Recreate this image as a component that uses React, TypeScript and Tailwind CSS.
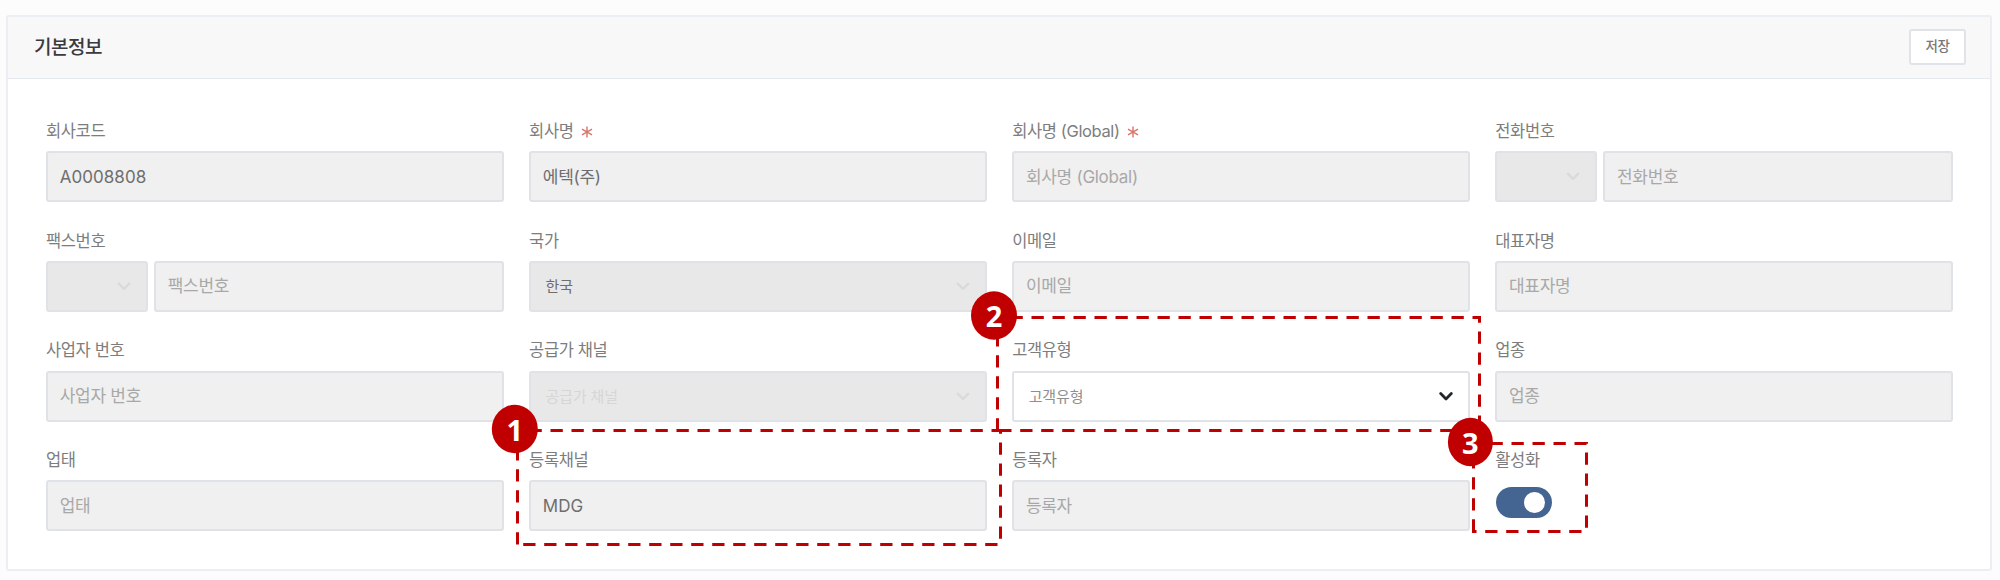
import type { ReactNode } from "react";

function Chevron({ active = false }: { active?: boolean }) {
  return (
    <svg
      viewBox="0 0 14 9"
      className={`h-[9px] w-[14px] shrink-0 ${active ? "text-[#23272b]" : "text-[#d8dadb]"}`}
      fill="none"
      stroke="currentColor"
      strokeWidth={active ? 2.8 : 2.3}
      strokeLinecap="round"
      strokeLinejoin="round"
    >
      <path d="M1.7 1.6 7 6.900l5.300-5.300" />
    </svg>
  );
}

function RequiredMark() {
  return (
    <svg viewBox="0 0 12 12" className="mt-[2px] ml-[7px] size-3 text-[#d9756c]" fill="none" stroke="currentColor" strokeWidth="1.4">
      <path d="M6 .5v11M1 3.200l10 5.600M11 3.200 1 8.800" />
    </svg>
  );
}

function Field({ label, required = false, children }: { label: string; required?: boolean; children: ReactNode }) {
  return (
    <div className="flex min-w-0 flex-col">
      <div className="flex h-[42px] items-center pt-[2px] text-[16.5px] leading-none tracking-[-0.38px] whitespace-pre text-[#7d7d7d]">
        {label}
        {required && <RequiredMark />}
      </div>
      <div className="flex h-[51px] gap-[6px]">{children}</div>
    </div>
  );
}

function TextBox({ value, placeholder = "" }: { value?: string; placeholder?: string }) {
  return (
    <div
      className={`flex min-w-0 flex-1 items-center rounded-[3px] border-2 border-[#dfe3e7] bg-[#f0f0f0] px-[11.7px] pt-[1px] text-[17px] leading-none whitespace-pre ${
        value ? "text-[#6e6e6e]" : "text-[#a8a8a8]"
      } ${value && /^[A-Z]/.test(value) ? "tracking-[0.05px]" : "tracking-[-0.28px]"}`}
    >
      {value ?? placeholder}
    </div>
  );
}

function SelectBox({ text = "", tone = "text-[#6e6e6e]", small = false, active = false }: { text?: string; tone?: string; small?: boolean; active?: boolean }) {
  return (
    <div
      className={`flex items-center justify-between rounded-[3px] border-2 border-[#dfe3e7] pr-[15px] pl-[14.5px] text-[15px] leading-none tracking-[-0.15px] whitespace-pre ${
        small ? "w-[102px] shrink-0" : "flex-1"
      } ${active ? "bg-white" : "bg-[#e8e8e8]"} ${tone}`}
    >
      <span>{text}</span>
      <Chevron active={active} />
    </div>
  );
}

function Marker({ n, cx, cy, rx = 23 }: { n: number; cx: number; cy: number; rx?: number }) {
  return (
    <g>
      <ellipse cx={cx} cy={cy} rx={rx} ry={24.2} fill="#c00000" />
      <text x={cx} y={cy + 11.5} textAnchor="middle" className="fill-white font-['Open_Sans',sans-serif] text-[29px] font-bold">
        {n}
      </text>
    </g>
  );
}

function Annotations() {
  return (
    <svg className="pointer-events-none absolute inset-0 h-[580px] w-[2000px]" viewBox="0 0 2000 580">
      <g fill="none" stroke="#c00000" strokeWidth="3" strokeDasharray="12.3 8.7">
        <path d="M517.5 544.5V430.500H1000.500V544.500Z" />
        <path d="M997.5 430.5V317.500H1479.500V430.500Z" />
        <path d="M1473.5 531.5V443.500H1586.500V531.500Z" />
      </g>
      <Marker n={1} cx={514.8} cy={429} />
      <Marker n={2} cx={994} cy={315.5} />
      <Marker n={3} cx={1470.4} cy={442} rx={22.5} />
    </svg>
  );
}

export default function App() {
  return (
    <div className="relative h-[580px] w-[2000px] overflow-hidden bg-[#fcfcfc] px-[6px] pt-[15px] font-['Inter','Noto_Sans_CJK_KR',sans-serif]">
      <section className="h-[556px] w-[1986px] rounded-[3px] border-2 border-[#ebeef2] bg-white">
        <header className="flex h-[62px] items-center justify-between border-b border-[#e4e9ef] bg-[#f8f8f8] pr-[24px] pb-[1px] pl-[26px]">
          <h1 className="text-[19px] leading-none font-medium tracking-[-0.5px] text-[#3a3a3f]">기본정보</h1>
          <button className="h-9 w-[57px] rounded-[3px] border-2 border-[#e0e4e8] bg-white text-[13.5px] leading-none font-medium tracking-[-0.5px] text-[#777]">
            저장
          </button>
        </header>
        <div className="grid grid-cols-4 gap-x-[25.4px] gap-y-[16.8px] pt-[30px] pr-[37px] pl-[38px]">
          <Field label="회사코드"><TextBox value="A0008808" /></Field>
          <Field label="회사명" required><TextBox value="에텍(주)" /></Field>
          <Field label="회사명 (Global)" required><TextBox placeholder="회사명 (Global)" /></Field>
          <Field label="전화번호"><SelectBox small /><TextBox placeholder="전화번호" /></Field>

          <Field label="팩스번호"><SelectBox small /><TextBox placeholder="팩스번호" /></Field>
          <Field label="국가"><SelectBox text="한국" /></Field>
          <Field label="이메일"><TextBox placeholder="이메일" /></Field>
          <Field label="대표자명"><TextBox placeholder="대표자명" /></Field>

          <Field label="사업자 번호"><TextBox placeholder="사업자 번호" /></Field>
          <Field label="공급가 채널"><SelectBox text="공급가 채널" tone="text-[#d6d6d6]" /></Field>
          <Field label="고객유형"><SelectBox text="고객유형" tone="text-[#8f8f8f]" active /></Field>
          <Field label="업종"><TextBox placeholder="업종" /></Field>

          <Field label="업태"><TextBox placeholder="업태" /></Field>
          <Field label="등록채널"><TextBox value="MDG" /></Field>
          <Field label="등록자"><TextBox placeholder="등록자" /></Field>
          <Field label="활성화">
            <div className="mt-[6.5px] ml-[0.6px] flex h-[31px] w-[56px] items-center justify-end rounded-full bg-[#446592] pr-[7px]">
              <div className="size-[21px] rounded-full bg-white" />
            </div>
          </Field>
        </div>
      </section>
      <Annotations />
    </div>
  );
}
